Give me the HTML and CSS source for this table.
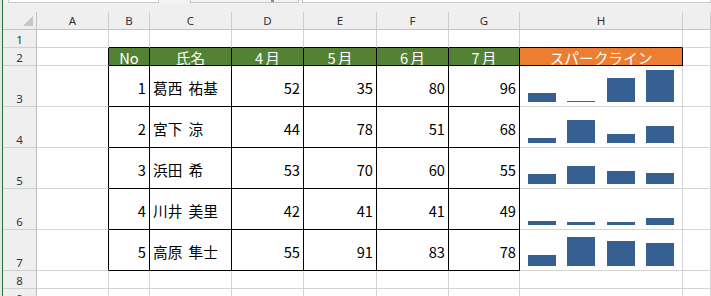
FILE: index.html
```html
<!DOCTYPE html>
<html lang="ja">
<head>
<meta charset="utf-8">
<title>スパークライン</title>
<link rel="stylesheet" href="styles.css">
</head>
<body>
<div class="app">
  <div class="edge"></div>
  <div class="main">
    <div class="fbar">
      <div class="namebox"></div>
      <div class="fxbox"><span class="grip"></span></div>
      <div class="formula"></div>
    </div>
    <div class="topgap"></div>
    <div class="sheet">
      <!-- column headers -->
      <div class="c corner"><span class="tri"></span></div>
      <div class="c ch">A</div>
      <div class="c ch">B</div>
      <div class="c ch">C</div>
      <div class="c ch">D</div>
      <div class="c ch">E</div>
      <div class="c ch">F</div>
      <div class="c ch">G</div>
      <div class="c ch">H</div>
      <div class="c ch"></div>

      <!-- row 1 -->
      <div class="c rh">1</div>
      <div class="c"></div>
      <div class="c bb"></div>
      <div class="c bb"></div>
      <div class="c bb"></div>
      <div class="c bb"></div>
      <div class="c bb"></div>
      <div class="c bb"></div>
      <div class="c bb"></div>
      <div class="c"></div>

      <!-- row 2 -->
      <div class="c rh">2</div>
      <div class="c br"></div>
      <div class="c hd br bb">No</div>
      <div class="c hd br bb">氏名</div>
      <div class="c hd month br bb">4月</div>
      <div class="c hd month br bb">5月</div>
      <div class="c hd month br bb">6月</div>
      <div class="c hd month br bb">7月</div>
      <div class="c hd orange br bb">スパークライン</div>
      <div class="c"></div>

      <!-- row 3 -->
      <div class="c rh">3</div>
      <div class="c br"></div>
      <div class="c num br bb">1</div>
      <div class="c name br bb">葛西 祐基</div>
      <div class="c num br bb">52</div>
      <div class="c num br bb">35</div>
      <div class="c num br bb">80</div>
      <div class="c num br bb">96</div>
      <div class="c spark">
        <span class="bar" style="height:9px"></span>
        <span class="bar" style="height:1px"></span>
        <span class="bar" style="height:24px"></span>
        <span class="bar" style="height:32px"></span>
      </div>
      <div class="c"></div>

      <!-- row 4 -->
      <div class="c rh">4</div>
      <div class="c br"></div>
      <div class="c num br bb">2</div>
      <div class="c name br bb">宮下 涼</div>
      <div class="c num br bb">44</div>
      <div class="c num br bb">78</div>
      <div class="c num br bb">51</div>
      <div class="c num br bb">68</div>
      <div class="c spark">
        <span class="bar" style="height:5px"></span>
        <span class="bar" style="height:23px"></span>
        <span class="bar" style="height:9px"></span>
        <span class="bar" style="height:17px"></span>
      </div>
      <div class="c"></div>

      <!-- row 5 -->
      <div class="c rh">5</div>
      <div class="c br"></div>
      <div class="c num br bb">3</div>
      <div class="c name br bb">浜田 希</div>
      <div class="c num br bb">53</div>
      <div class="c num br bb">70</div>
      <div class="c num br bb">60</div>
      <div class="c num br bb">55</div>
      <div class="c spark">
        <span class="bar" style="height:10px"></span>
        <span class="bar" style="height:18px"></span>
        <span class="bar" style="height:13px"></span>
        <span class="bar" style="height:11px"></span>
      </div>
      <div class="c"></div>

      <!-- row 6 -->
      <div class="c rh">6</div>
      <div class="c br"></div>
      <div class="c num br bb">4</div>
      <div class="c name br bb">川井 美里</div>
      <div class="c num br bb">42</div>
      <div class="c num br bb">41</div>
      <div class="c num br bb">41</div>
      <div class="c num br bb">49</div>
      <div class="c spark">
        <span class="bar" style="height:4px"></span>
        <span class="bar" style="height:3px"></span>
        <span class="bar" style="height:3px"></span>
        <span class="bar" style="height:7px"></span>
      </div>
      <div class="c"></div>

      <!-- row 7 -->
      <div class="c rh">7</div>
      <div class="c br"></div>
      <div class="c num br bb">5</div>
      <div class="c name br bb">高原 隼士</div>
      <div class="c num br bb">55</div>
      <div class="c num br bb">91</div>
      <div class="c num br bb">83</div>
      <div class="c num br bb">78</div>
      <div class="c spark">
        <span class="bar" style="height:11px"></span>
        <span class="bar" style="height:29px"></span>
        <span class="bar" style="height:25px"></span>
        <span class="bar" style="height:23px"></span>
      </div>
      <div class="c"></div>

      <!-- row 8 -->
      <div class="c rh">8</div>
      <div class="c"></div>
      <div class="c"></div>
      <div class="c"></div>
      <div class="c"></div>
      <div class="c"></div>
      <div class="c"></div>
      <div class="c"></div>
      <div class="c"></div>
      <div class="c"></div>

      <!-- row 9 (partly visible) -->
      <div class="c rh">9</div>
      <div class="c"></div>
      <div class="c"></div>
      <div class="c"></div>
      <div class="c"></div>
      <div class="c"></div>
      <div class="c"></div>
      <div class="c"></div>
      <div class="c"></div>
      <div class="c"></div>
    </div>
  </div>
</div>
</body>
</html>
```
FILE: styles.css
```css
html, body {
  margin: 0;
  padding: 0;
  background: #ffffff;
}

body {
  width: 711px;
  height: 296px;
  overflow: hidden;
  font-family: "Noto Sans CJK JP", "Noto Sans", sans-serif;
}

.app {
  display: flex;
  width: 711px;
  height: 296px;
  overflow: hidden;
}

.edge {
  width: 2px;
  flex: none;
  background: #e6e6e6;
  border-right: 1px solid #217346;
}

.main {
  flex: 1;
  display: flex;
  flex-direction: column;
  min-width: 0;
  background: #efefef;
}

.fbar {
  height: 4px;
  flex: none;
  display: flex;
  align-items: flex-start;
  background: #f3f3f3;
}

.namebox,
.fxbox,
.formula {
  box-sizing: border-box;
  height: 3px;
  background: #ffffff;
  border: 1px solid #c6c6c6;
  border-top: none;
}

.namebox {
  width: 151px;
  margin-left: 5px;
}

.fxbox {
  position: relative;
  width: 109px;
  margin-left: 31px;
  background: #f3f3f3;
}

.grip {
  position: absolute;
  left: 80px;
  top: 0;
  width: 3px;
  height: 2px;
  background: #8a8a8a;
}

.formula {
  flex: 1;
  margin-left: 3px;
}

.topgap {
  height: 8px;
  flex: none;
  background: #efefef;
}

.sheet {
  display: grid;
  grid-template-columns: 34px 72px 41px 82px 72px 73px 72px 71px 163px 28px;
  grid-template-rows: 18px 18px 18px 41px 41px 41px 41px 41px 18px 18px;
  background: #ffffff;
}

.c {
  box-sizing: border-box;
  min-width: 0;
  display: flex;
  align-items: center;
  border-right: 1px solid #d4d4d4;
  border-bottom: 1px solid #d4d4d4;
  font-size: 14.67px;
  color: #000000;
  white-space: nowrap;
  overflow: hidden;
}

.corner {
  position: relative;
  background: #efefef;
  border-right: 1px solid #c4c4c4;
  border-bottom: 1px solid #c4c4c4;
}

.tri {
  position: absolute;
  right: 3px;
  bottom: 3px;
  width: 0;
  height: 0;
  border-left: 10px solid transparent;
  border-bottom: 10px solid #c6c6c6;
}

.ch {
  justify-content: center;
  background: #efefef;
  border-right: 1px solid #cdcdcd;
  border-bottom: 1px solid #c4c4c4;
  font-family: "Noto Sans", "Open Sans", sans-serif;
  font-size: 11.5px;
  color: #333333;
  line-height: 17px;
}

.rh {
  justify-content: center;
  align-items: flex-end;
  background: #efefef;
  border-right: 1px solid #bdbdbd;
  border-bottom: 1px solid #d0d0d0;
  font-family: "Noto Sans", "Open Sans", sans-serif;
  font-size: 11.5px;
  color: #333333;
  line-height: 15px;
}

.br {
  border-right-color: #000000;
}

.bb {
  border-bottom-color: #000000;
}

.hd {
  justify-content: center;
  background: #548235;
  color: #ffffff;
  line-height: 17px;
  padding-top: 1px;
}

.month {
  letter-spacing: 2px;
  padding-left: 2px;
}

.orange {
  background: #ed7d31;
}

.num {
  justify-content: flex-end;
  padding-right: 3px;
  padding-top: 2px;
}

.name {
  padding-left: 3px;
  padding-top: 2px;
  word-spacing: 3px;
}

.spark {
  justify-content: space-between;
  align-items: flex-end;
  padding: 0 8px 4px 8px;
}

.bar {
  display: block;
  width: 28px;
  background: #376092;
}
```
